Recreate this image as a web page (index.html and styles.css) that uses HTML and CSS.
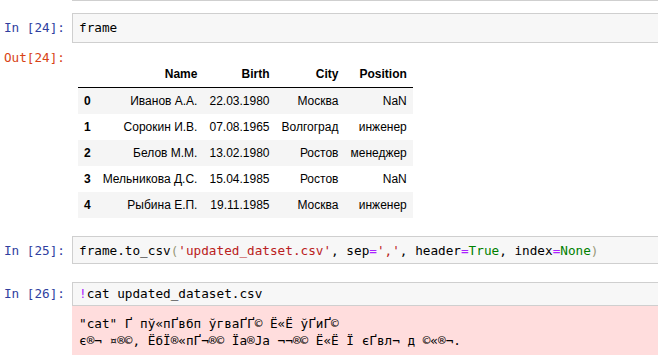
FILE: index.html
```html
<!DOCTYPE html>
<html>
<head>
<meta charset="utf-8">
<link rel="stylesheet" href="styles.css">
</head>
<body>
<div class="nb">
  <div class="topline"></div>

  <div class="row cell c24">
    <div class="prompt in">In [24]:</div>
    <div class="input">frame</div>
  </div>

  <div class="row out">
    <div class="prompt outp">Out[24]:</div>
    <div class="outbody">
      <table class="df">
        <thead>
          <tr><th></th><th>Name</th><th>Birth</th><th>City</th><th>Position</th></tr>
        </thead>
        <tbody>
          <tr><th>0</th><td>Иванов А.А.</td><td>22.03.1980</td><td>Москва</td><td>NaN</td></tr>
          <tr><th>1</th><td>Сорокин И.В.</td><td>07.08.1965</td><td>Волгоград</td><td>инженер</td></tr>
          <tr><th>2</th><td>Белов М.М.</td><td>13.02.1980</td><td>Ростов</td><td>менеджер</td></tr>
          <tr><th>3</th><td>Мельникова Д.С.</td><td>15.04.1985</td><td>Ростов</td><td>NaN</td></tr>
          <tr><th>4</th><td>Рыбина Е.П.</td><td>19.11.1985</td><td>Москва</td><td>инженер</td></tr>
        </tbody>
      </table>
    </div>
  </div>

  <div class="row cell c25">
    <div class="prompt in">In [25]:</div>
    <div class="input">frame.to_csv<span class="br">(</span><span class="st">'updated_datset.csv'</span>, sep<span class="op">=</span><span class="st">','</span>, header<span class="op">=</span><span class="kw">True</span>, index<span class="op">=</span><span class="kw">None</span><span class="br">)</span></div>
  </div>

  <div class="row cell c26">
    <div class="prompt in">In [26]:</div>
    <div class="col">
      <div class="input short"><span class="op">!</span>cat updated_dataset.csv</div>
      <div class="stderr">"cat" Ґ пў«пҐвбп ўгваҐҐ© Ё«Ё ўҐиҐ©
є®¬ ¤®©, ЁбЇ®«пҐ¬®© Їа®Ја ¬¬®© Ё«Ё Ї єҐвл¬ д ©«®¬.</div>
    </div>
  </div>
</div>
</body>
</html>
```

FILE: styles.css
```css
html, body {
  margin: 0;
  padding: 0;
  background: #ffffff;
}
body {
  width: 658px;
  height: 359px;
  overflow: hidden;
  font-family: "DejaVu Sans Mono", monospace;
  font-size: 12.7px;
  color: #000;
}
.nb {
  width: 658px;
}
.topline {
  margin-left: 72px;
  border-top: 1px solid #cfcfcf;
}
.row {
  display: flex;
  align-items: flex-start;
}
.prompt {
  width: 72px;
  flex: none;
  box-sizing: border-box;
  padding-right: 7px;
  text-align: right;
  white-space: pre;
}
.in {
  color: #303F9F;
  padding-top: 6px;
  line-height: 18px;
}
.outp {
  color: #D84315;
  padding-top: 6px;
  line-height: 17px;
}
.col {
  flex: 1;
  min-width: 0;
  display: flex;
  flex-direction: column;
}
.input {
  flex: 1;
  min-width: 0;
  background: #f7f7f7;
  border: 1px solid #cfcfcf;
  border-right: none;
  padding: 5px 6px;
  line-height: 18px;
  white-space: pre;
  overflow: hidden;
}
.c24 { margin-top: 12px; }
.c25 { margin-top: 18px; }
.c25 .input { padding: 5px 6px 4px; line-height: 17px; }
.c25 .in { line-height: 17px; }
.c26 { margin-top: 18px; }
.c26 .in { padding-top: 3px; }
.input.short { padding: 2px 6px 2px; line-height: 18px; }

.outbody {
  flex: 1;
  padding-left: 6px;
}
.df {
  margin-top: 18px;
  border-collapse: collapse;
  font-family: "Liberation Sans", Arial, sans-serif;
  font-size: 12px;
  color: #000;
}
.df th, .df td {
  padding: 6px;
  line-height: 14px;
  text-align: right;
  white-space: nowrap;
}
.df thead {
  border-bottom: 1px solid #000;
}
.df thead th { font-weight: bold; }
.df tbody th { font-weight: bold; text-align: left; }
.df tbody tr:nth-child(odd) { background: #f5f5f5; }

.stderr {
  background: #ffdddd;
  padding: 9px 7px 6px;
  line-height: 17px;
  white-space: pre;
  height: 34px;
  overflow: hidden;
}

.st { color: #BA2121; }
.op { color: #AA22FF; }
.kw { color: #008000; }
.br { color: #999977; }
```
